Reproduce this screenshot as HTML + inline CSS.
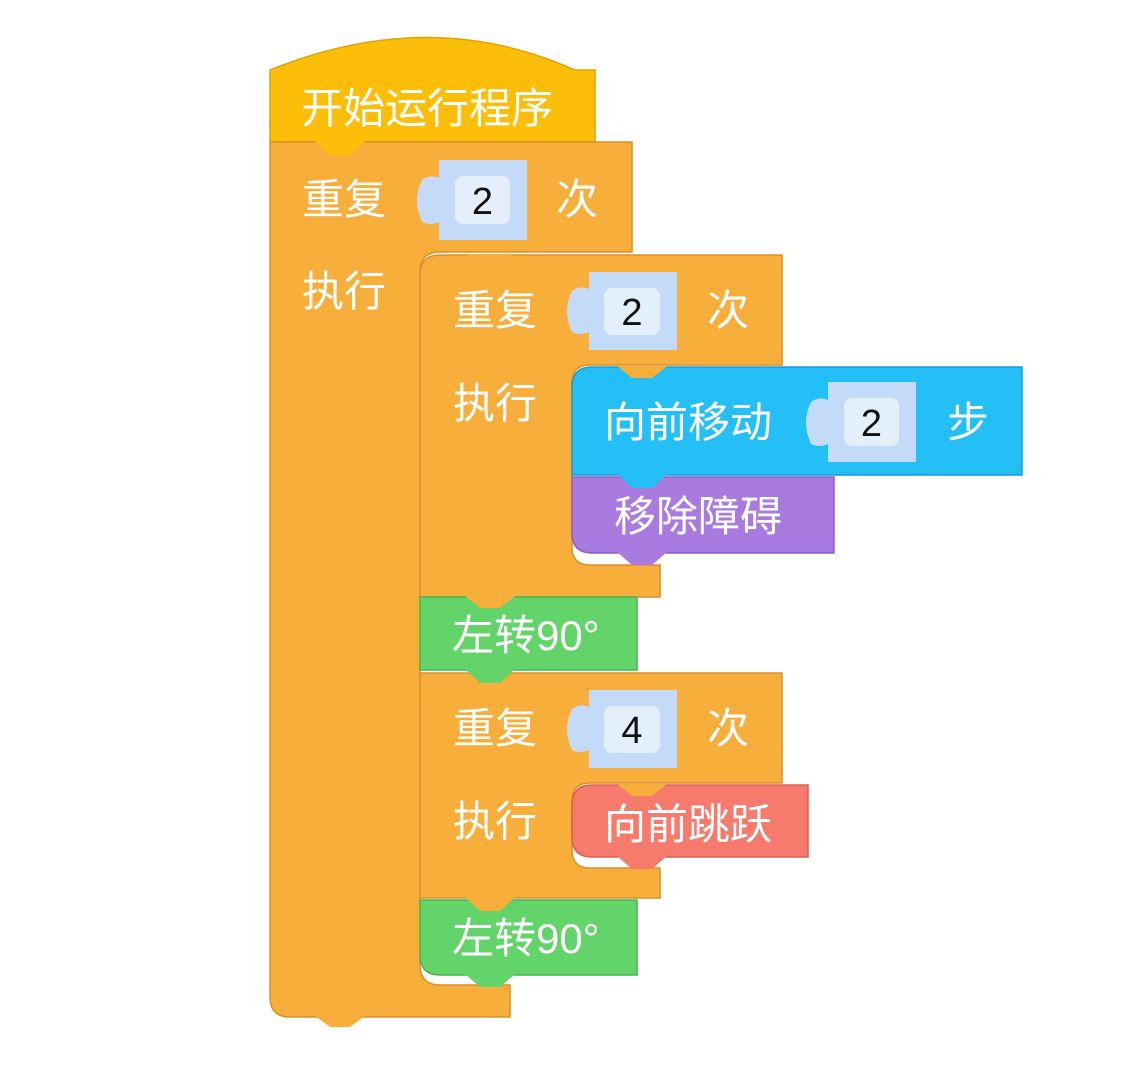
<!DOCTYPE html>
<html><head><meta charset="utf-8"><style>
html,body{margin:0;padding:0;background:#fff;}
svg{display:block;}
text{font-family:"Liberation Sans","Noto Sans CJK SC",sans-serif;}
.t{fill:#fff;font-size:42px;}
.n{fill:#111;font-size:38px;}
</style></head><body>
<svg width="1124" height="1066" viewBox="0 0 1124 1066">
<path d="M270 70 Q430 5 575 70 L595 70 L595 142 L270 142 Z" fill="#FDBE0A" stroke="#E0A300" stroke-width="1.5"/>
<path d="M270 142 L632 142 L632 252 L440 252 Q420 252 420 272 L420 965 Q420 985 440 985 L510 985 L510 1017 L290 1017 Q270 1017 270 997 Z" fill="#F8AE3B" stroke="#D8912B" stroke-width="1.5"/>
<path d="M420 275 Q420 255 440 255 L782 255 L782 365 L590 365 Q572 365 572 383 L572 547 Q572 565 590 565 L660 565 L660 597 L420 597 Z" fill="#F8AE3B" stroke="#D8912B" stroke-width="1.5"/>
<path d="M572 387 Q572 367 592 367 L1022 367 L1022 475 L572 475 Z" fill="#24BFF6" stroke="#159ED0" stroke-width="1.5"/>
<path d="M572 477 L834 477 L834 553 L592 553 Q572 553 572 533 Z" fill="#A97AE0" stroke="#8C5EC4" stroke-width="1.5"/>
<path d="M420 597 L637 597 L637 670 L420 670 Z" fill="#62D46A" stroke="#47B650" stroke-width="1.5"/>
<path d="M420 673 L782 673 L782 783 L590 783 Q572 783 572 801 L572 850 Q572 868 590 868 L660 868 L660 898 L420 898 Z" fill="#F8AE3B" stroke="#D8912B" stroke-width="1.5"/>
<path d="M572 805 Q572 785 592 785 L808 785 L808 857 L592 857 Q572 857 572 837 Z" fill="#F77B6D" stroke="#D85F53" stroke-width="1.5"/>
<path d="M420 900 L637 900 L637 975 L440 975 Q420 975 420 955 Z" fill="#62D46A" stroke="#47B650" stroke-width="1.5"/>

<polygon points="315,141 330,155 350,155 365,141" fill="#FDBE0A"/>
<polygon points="465,254 480,266 500,266 515,254" fill="#F8AE3B"/>
<polygon points="617,366 632,378 652,378 667,366" fill="#F8AE3B"/>
<polygon points="617,474 632,488 652,488 667,474" fill="#24BFF6"/>
<polygon points="617,552 632,565 652,565 667,552" fill="#A97AE0"/>
<polygon points="465,596 480,608 500,608 515,596" fill="#F8AE3B"/>
<polygon points="465,669 480,683 500,683 515,669" fill="#62D46A"/>
<polygon points="617,784 632,796 652,796 667,784" fill="#F8AE3B"/>
<polygon points="617,856 632,869 652,869 667,856" fill="#F77B6D"/>
<polygon points="465,897 480,911 500,911 515,897" fill="#F8AE3B"/>
<polygon points="465,974 480,987 500,987 515,974" fill="#62D46A"/>
<polygon points="315,1016 330,1027 350,1027 365,1016" fill="#F8AE3B"/>

<g>
<path d="M439 160 L527 160 L527 240 L439 240 L439 222 Q430 226 422 222 Q412 200 422 180 Q430 174 439 178 Z" fill="#C3DBF8"/>
<rect x="455" y="176" width="55" height="48" rx="8" fill="#E4EFFC"/>
<text class="n" x="482.5" y="214" text-anchor="middle">2</text>
</g>
<g>
<path d="M589 272 L677 272 L677 350 L589 350 L589 332 Q580 336 572 332 Q562 311 572 291 Q580 285 589 289 Z" fill="#C3DBF8"/>
<rect x="604" y="288" width="56" height="47" rx="8" fill="#E4EFFC"/>
<text class="n" x="632" y="325" text-anchor="middle">2</text>
</g>
<g>
<path d="M828 382 L916 382 L916 462 L828 462 L828 444 Q819 448 811 444 Q801 422 811 402 Q819 396 828 400 Z" fill="#C3DBF8"/>
<rect x="844" y="398" width="55" height="48" rx="8" fill="#E4EFFC"/>
<text class="n" x="871.5" y="436" text-anchor="middle">2</text>
</g>
<g>
<path d="M589 690 L677 690 L677 768 L589 768 L589 750 Q580 754 572 750 Q562 729 572 709 Q580 703 589 707 Z" fill="#C3DBF8"/>
<rect x="604" y="706" width="56" height="47" rx="8" fill="#E4EFFC"/>
<text class="n" x="632" y="743" text-anchor="middle">4</text>
</g>

<text class="t" x="301" y="123">开始运行程序</text>
<text class="t" x="302" y="214">重复</text>
<text class="t" x="556" y="214">次</text>
<text class="t" x="302" y="306">执行</text>
<text class="t" x="453" y="325">重复</text>
<text class="t" x="707" y="325">次</text>
<text class="t" x="453" y="418">执行</text>
<text class="t" x="604" y="437">向前移动</text>
<text class="t" x="947" y="437">步</text>
<text class="t" x="614" y="531">移除障碍</text>
<text class="t" x="452" y="650">左转90°</text>
<text class="t" x="453" y="743">重复</text>
<text class="t" x="707" y="743">次</text>
<text class="t" x="453" y="836">执行</text>
<text class="t" x="604" y="839">向前跳跃</text>
<text class="t" x="452" y="953">左转90°</text>
</svg>
</body></html>
